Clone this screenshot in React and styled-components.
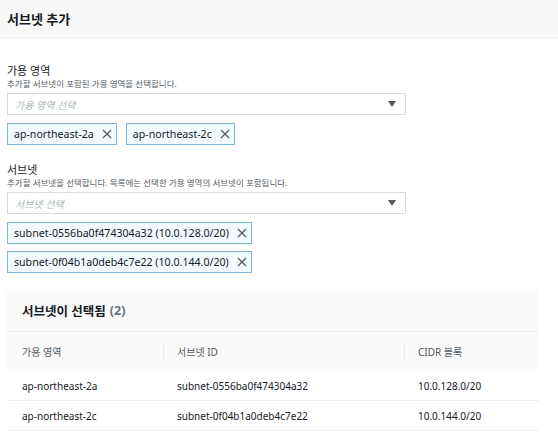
import React from 'react';
import styled, { createGlobalStyle } from 'styled-components';

const GlobalStyle = createGlobalStyle`
    body {
        margin: 0;
        background: #fff;
        font-family: "Noto Sans", "Noto Sans CJK KR", sans-serif;
        color: #16191f;
    }
`;

const Page = styled.div`
    width: 558px;
    height: 441px;
    overflow: hidden;
`;

const Header = styled.div`
    height: 37px;
    display: flex;
    align-items: center;
    padding: 0 7px;
    background: #f8f8f8;
    border-bottom: 1px solid #eaeded;
    font-size: 13px;
    font-weight: 700;
`;

const Body = styled.div`
    padding: 25px 7px 0;
`;

const Field = styled.div`
    display: flex;
    flex-direction: column;
    margin-bottom: ${({ gap }) => gap || 0}px;
`;

const Label = styled.div`
    font-size: 11px;
    line-height: 15px;
`;

const Description = styled.div`
    font-size: 8.5px;
    line-height: 12px;
    color: #545b64;
    margin-bottom: 3px;
`;

const Select = styled.div`
    width: 399px;
    height: 22px;
    box-sizing: border-box;
    border: 1px solid #d5dbdb;
    display: flex;
    align-items: center;
    justify-content: space-between;
    padding: 0 9px 0 7px;
    font-size: 10px;
    font-style: italic;
    color: #aab7b8;
`;

const Caret = styled.span`
    width: 0;
    height: 0;
    border-left: 4px solid transparent;
    border-right: 4px solid transparent;
    border-top: 6px solid #545b64;
`;

const Tokens = styled.div`
    display: flex;
    flex-wrap: ${({ column }) => (column ? 'nowrap' : 'wrap')};
    flex-direction: ${({ column }) => (column ? 'column' : 'row')};
    align-items: flex-start;
    gap: 7px 9px;
    margin-top: 8px;
`;

const Token = styled.div`
    height: 22px;
    box-sizing: border-box;
    display: flex;
    align-items: center;
    gap: 8px;
    padding: 0 4px 0 6px;
    background: #f1faff;
    border: 1px solid #7fb6dc;
    font-size: 10.6px;
    color: #16191f;
`;

const Cross = () => (
    <svg width="10" height="10" viewBox="0 0 10 10">
        <path d="M1 1 L9 9 M9 1 L1 9" stroke="#545b64" strokeWidth="1.3" fill="none" />
    </svg>
);

const Panel = styled.div`
    margin: 16px 13px 0 0;
`;

const PanelTitle = styled.div`
    height: 43px;
    box-sizing: border-box;
    display: flex;
    align-items: center;
    padding: 0 15px;
    background: #fafafa;
    border-bottom: 1px solid #eaeded;
    font-size: 12.5px;
    font-weight: 700;
`;

const Count = styled.span`
    color: #687078;
    margin-left: 4px;
`;

const Row = styled.div`
    display: grid;
    grid-template-columns: 156px 241px 1fr;
    height: ${({ head }) => (head ? 38 : 29)}px;
    background: ${({ head }) => (head ? '#fafafa' : '#fff')};
    border-bottom: 1px solid ${({ head }) => (head ? '#fafafa' : '#eaeded')};
    font-size: 10px;
    color: ${({ head }) => (head ? '#545b64' : '#16191f')};
`;

const Cell = styled.div`
    display: flex;
    align-items: center;
    padding-left: ${({ first }) => (first ? 15 : 14)}px;
    position: relative;

    ${({ divider }) =>
        divider &&
        `
    &::before {
        content: '';
        position: absolute;
        left: 0;
        top: 10px;
        bottom: 10px;
        width: 1px;
        background: #eaeded;
    }
  `}
`;

const zones = ['ap-northeast-2a', 'ap-northeast-2c'];

const subnets = [
    { zone: 'ap-northeast-2a', id: 'subnet-0556ba0f474304a32', cidr: '10.0.128.0/20' },
    { zone: 'ap-northeast-2c', id: 'subnet-0f04b1a0deb4c7e22', cidr: '10.0.144.0/20' },
];

const App = () => (
    <Page>
        <GlobalStyle />
        <Header>서브넷 추가</Header>
        <Body>
            <Field gap={17}>
                <Label>가용 영역</Label>
                <Description>추가할 서브넷이 포함된 가용 영역을 선택합니다.</Description>
                <Select>
                    가용 영역 선택
                    <Caret />
                </Select>
                <Tokens>
                    {zones.map((z) => (
                        <Token key={z}>
                            {z}
                            <Cross />
                        </Token>
                    ))}
                </Tokens>
            </Field>
            <Field>
                <Label>서브넷</Label>
                <Description>추가할 서브넷을 선택합니다. 목록에는 선택한 가용 영역의 서브넷이 포함됩니다.</Description>
                <Select>
                    서브넷 선택
                    <Caret />
                </Select>
                <Tokens column>
                    {subnets.map((s) => (
                        <Token key={s.id}>
                            {s.id} ({s.cidr})
                            <Cross />
                        </Token>
                    ))}
                </Tokens>
            </Field>
            <Panel>
                <PanelTitle>
                    서브넷이 선택됨<Count>(2)</Count>
                </PanelTitle>
                <Row head>
                    <Cell first>가용 영역</Cell>
                    <Cell divider>서브넷 ID</Cell>
                    <Cell divider>CIDR 블록</Cell>
                </Row>
                {subnets.map((s) => (
                    <Row key={s.id}>
                        <Cell first>{s.zone}</Cell>
                        <Cell>{s.id}</Cell>
                        <Cell>{s.cidr}</Cell>
                    </Row>
                ))}
            </Panel>
        </Body>
    </Page>
);

export default App;
